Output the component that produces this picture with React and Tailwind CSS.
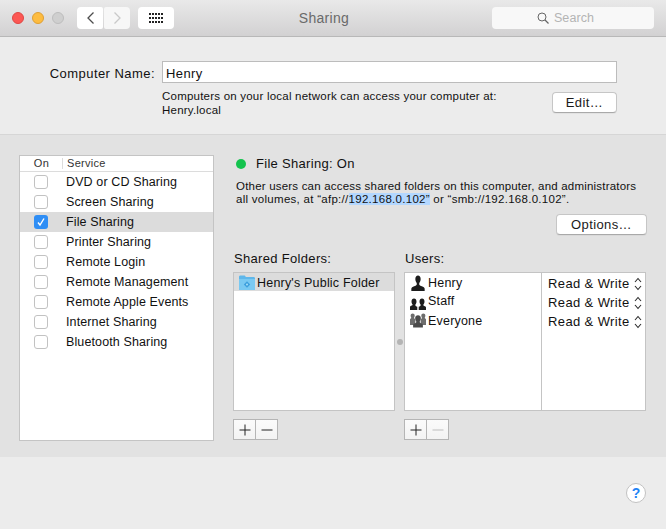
import React from 'react';

const services = [
  'DVD or CD Sharing',
  'Screen Sharing',
  'File Sharing',
  'Printer Sharing',
  'Remote Login',
  'Remote Management',
  'Remote Apple Events',
  'Internet Sharing',
  'Bluetooth Sharing',
];

const Light = ({ className }) => (
  <span className={`block w-3 h-3 rounded-full border ${className}`} />
);

const Person = ({ className }) => (
  <svg viewBox="0 0 16 18" className={className}>
    <path d="M5 4.500C5 2 6.200 0.500 8 0.500S11 2 11 4.500c0 2-.7 3.600-1.600 4.500v1.600c0 .9 1.500 1.400 3 2 1.600.6 3.100 1.300 3.100 2.900V18H.5v-2.500c0-1.600 1.500-2.300 3.100-2.900 1.500-.6 3-1.100 3-2V9C5.700 8.100 5 6.500 5 4.500z" fill="currentColor" />
  </svg>
);

const Staff = () => (
  <svg viewBox="0 0 16 12" className="w-4 h-3 text-[#1c1c1c]">
    <path d="M1.500 3.500C1.500 1.500 2.500.5 4 .5s2.500 1 2.500 3c0 1.300-.5 2.500-1.100 3.100v.9c0 .5 1 .8 1.900 1.200V12H0V8.900c0-.7.9-1 1.700-1.400.5-.2.9-.4.9-.7v-.2C2 6 1.500 4.800 1.500 3.500z" fill="currentColor" />
    <path d="M9.500 3.500c0-2 1-3 2.500-3s2.500 1 2.500 3c0 1.300-.5 2.500-1.100 3.100v.6c0 .4.500.6.900.8.800.4 1.700.7 1.700 1.400V12H8.700V8.700c.9-.4 1.900-.7 1.900-1.200v-.9C10 6 9.500 4.800 9.500 3.500z" fill="currentColor" />
  </svg>
);

const Everyone = () => (
  <svg viewBox="0 0 18 16" className="w-4 h-[15px]">
    <path d="M0 13V7c0-1 1-1.300 1.500-1.800C1 4.500.7 3.500.7 2.500.7 1 1.700 0 3 0s2.300 1 2.300 2.500c0 1-.3 2-.8 2.700L6 7v6z" fill="#6d6d6d" />
    <path d="M18 13V7c0-1-1-1.300-1.500-1.800.5-.7.8-1.700.8-2.700C17.300 1 16.300 0 15 0s-2.300 1-2.300 2.500c0 1 .3 2 .8 2.700L12 7v6z" fill="#6d6d6d" />
    <path d="M5.800 5.500C5.800 3.500 7 2.200 9 2.200s3.200 1.300 3.200 3.300c0 1.400-.5 2.600-1.200 3.400v1c0 .6 1 1 2 1.500 1 .4 1.500 1 1.500 2V16H3.500v-2.600c0-1 .5-1.600 1.500-2 1-.5 2-.9 2-1.500v-1c-.7-.8-1.200-2-1.200-3.400z" fill="#4a4a4a" />
  </svg>
);

const Folder = () => (
  <svg viewBox="0 0 16 15" className="w-4 h-[15px]">
    <path d="M0 2C0 1 .5.500 1.500.500h3.700c.8 0 1 .3 1.300 1l.3.500H14.500c1 0 1.500.5 1.500 1.500V13.500c0 1-.5 1.500-1.500 1.500h-13C.5 15 0 14.500 0 13.500z" fill="#5fb7ea" />
    <path d="M0 4h16v9.500c0 1-.5 1.500-1.500 1.500h-13C.5 15 0 14.500 0 13.500z" fill="#79c9f2" />
    <path d="M8 6.200L11.200 9.500 8 12.800 4.800 9.500z" fill="#3c9fdd" />
    <circle cx="8" cy="9.500" r="1" fill="#a9e0f8" />
  </svg>
);

const Stepper = () => (
  <svg viewBox="0 0 8 14" className="w-2 h-[14px] text-[#2a2a2a]">
    <path d="M1 5l3-3.500L7 5M1 9l3 3.500L7 9" fill="none" stroke="currentColor" strokeWidth="1.100" />
  </svg>
);

const PlusMinus = ({ minusDisabled }) => (
  <div className="flex w-[45px] h-[21px] border border-[#b5b5b5] bg-gradient-to-b from-[#fbfbfb] to-[#f3f3f3]">
    <div className="flex-1 flex items-center justify-center border-r border-[#b5b5b5]">
      <svg viewBox="0 0 12 12" className="w-3 h-3">
        <path d="M6 0.500v11M0.500 6h11" stroke="#222" strokeWidth="1" />
      </svg>
    </div>
    <div className="flex-1 flex items-center justify-center">
      <svg viewBox="0 0 12 12" className="w-3 h-3">
        <path d="M0.500 6h11" stroke={minusDisabled ? '#bdbdbd' : '#222'} strokeWidth="1" />
      </svg>
    </div>
  </div>
);

const PushButton = ({ className, children }) => (
  <button className={`block bg-white rounded-[4px] border border-[#c6c6c6] border-b-[#a9a9a9] text-[13px] tracking-[0.4px] text-[#1a1a1a] leading-none shadow-[0_1px_0_rgba(0,0,0,0.04)] ${className}`}>
    {children}
  </button>
);

export default function App() {
  return (
    <div className="w-[666px] h-[529px] flex flex-col bg-[#ececec] overflow-hidden font-['Liberation_Sans',Arial,sans-serif] text-[#111]">
      {/* title bar */}
      <div className="relative h-[37px] shrink-0 flex items-center pl-3 pr-3 border-b border-[#b8b8b8] bg-gradient-to-b from-[#e9e9e9] to-[#d2d1d2]">
        <div className="flex gap-2 mb-[1px]">
          <Light className="bg-[#fc5753] border-[#df4744]" />
          <Light className="bg-[#fdbc40] border-[#de9f34]" />
          <Light className="bg-[#cfcfcf] border-[#bdbdbd]" />
        </div>
        <div className="flex gap-px ml-[13px] mb-[1px]">
          <div className="w-[26px] h-[22px] bg-white rounded-l-[4px] rounded-r-[2px] flex items-center justify-center">
            <svg viewBox="0 0 9 14" className="w-[9px] h-[14px]">
              <path d="M7.500 1.500L2 7l5.500 5.500" fill="none" stroke="#4d4d4d" strokeWidth="1.300" />
            </svg>
          </div>
          <div className="w-[26px] h-[22px] bg-[#f7f7f7] rounded-r-[4px] rounded-l-[2px] flex items-center justify-center">
            <svg viewBox="0 0 9 14" className="w-[9px] h-[14px]">
              <path d="M1.500 1.500L7 7l-5.500 5.500" fill="none" stroke="#c9c9c9" strokeWidth="1.300" />
            </svg>
          </div>
        </div>
        <div className="w-9 h-[22px] ml-2 mb-[1px] bg-white rounded-[4px] flex items-center justify-center">
          <div className="grid grid-cols-5 gap-x-px gap-y-[2px]">
            {Array.from({ length: 15 }).map((_, i) => (
              <span key={i} className="block w-[2px] h-[2px] bg-[#222]" />
            ))}
          </div>
        </div>
        <div className="flex-1 text-center text-[14px] tracking-[0.3px] text-[#6a6a6a] pr-[18px]">Sharing</div>
        <div className="w-[162px] h-[22px] mb-[1px] bg-[#f8f8f8] rounded-[4px] flex items-center justify-center gap-[5px] pr-[15px]">
          <svg viewBox="0 0 12 12" className="w-3 h-3">
            <circle cx="5" cy="5" r="4" fill="none" stroke="#666" strokeWidth="1" />
            <path d="M8 8l3.500 3.500" stroke="#666" strokeWidth="1.200" />
          </svg>
          <span className="text-[12.500px] tracking-[0.1px] text-[#b4b4b4] mt-[2px]">Search</span>
        </div>
      </div>

      {/* computer name */}
      <div className="h-[98px] shrink-0 pt-6 border-b border-[#d6d6d6]">
        <div className="flex items-center h-[22px]">
          <div className="w-[155px] text-right text-[13px] tracking-[0.45px] pt-[4px]">Computer Name:</div>
          <div className="ml-[7px] w-[455px] h-[22px] pl-[3px] bg-white border border-[#bcbcbc] text-[13px] tracking-[0.4px] leading-[24px]">Henry</div>
        </div>
        <div className="flex mt-[6px] ml-[162px]">
          <div className="w-[390px] text-[11.500px] tracking-[0.22px] leading-[14px]">
            <div>Computers on your local network can access your computer at:</div>
            <div>Henry.local</div>
          </div>
          <PushButton className="w-[65px] h-[21px] mt-[3px]">Edit…</PushButton>
        </div>
      </div>

      {/* services */}
      <div className="h-[322px] shrink-0 flex pt-5 pl-[19px] bg-[#e2e2e2]">
        <div className="w-[195px] h-[286px] bg-white border border-[#c4c4c4]">
          <div className="flex items-center h-[16px] border-b border-[#dcdcdc] text-[11px] tracking-[0.3px] text-[#333]">
            <div className="w-[43px] text-center pl-[1px] border-r border-[#dcdcdc] leading-[11px]">On</div>
            <div className="pl-[4px]">Service</div>
          </div>
          <div>
            {services.map((name) => {
              const on = name === 'File Sharing';
              return (
                <div key={name} className={`flex items-center h-5 ${on ? 'bg-[#dcdcdc]' : ''}`}>
                  {on ? (
                    <span className="ml-[14px] w-[14px] h-[14px] rounded-[3px] bg-[#2f8ef5] flex items-center justify-center">
                      <svg viewBox="0 0 10 10" className="w-[10px] h-[10px]">
                        <path d="M2 5.500L4 8 8 1.500" fill="none" stroke="#fff" strokeWidth="1.400" />
                      </svg>
                    </span>
                  ) : (
                    <span className="ml-[14px] w-[14px] h-[14px] rounded-[3px] bg-white border border-[#c2c2c2]" />
                  )}
                  <span className="ml-[18px] text-[12.500px] tracking-[0.12px]">{name}</span>
                </div>
              );
            })}
          </div>
        </div>

        <div className="ml-[19px] w-[414px]">
          <div className="flex items-center h-[20px] mt-[-1px] pl-[3px]">
            <span className="block w-[10px] h-[10px] rounded-full bg-[#14c34e]" />
            <span className="ml-[10px] text-[13px] tracking-[0.3px]">File Sharing: On</span>
          </div>
          <div className="mt-[6px] pl-[3px] text-[11.500px] tracking-[0.2px] leading-[13px] whitespace-nowrap">
            <div>Other users can access shared folders on this computer, and administrators</div>
            <div className="tracking-[0.28px]">
              all volumes, at “afp://<span className="bg-[#b3d7ff]">192.168.0.102”</span> or “smb://192.168.0.102”.
            </div>
          </div>
          <div className="flex justify-end mt-[8px]">
            <PushButton className="w-[91px] h-[21px]">Options…</PushButton>
          </div>
          <div className="flex mt-[14px] text-[13px] tracking-[0.32px] h-[23px]">
            <div className="w-[172px] pl-[1px]">Shared Folders:</div>
            <div>Users:</div>
          </div>
          <div className="flex items-center">
            <div className="w-[162px] h-[139px] bg-white border border-[#c4c4c4]">
              <div className="flex items-center h-[18px] bg-[#dcdcdc] pl-[5px] gap-[2px] text-[12.500px] tracking-[0.2px]">
                <Folder />
                <span className="mt-[2px]">Henry's Public Folder</span>
              </div>
            </div>
            <div className="w-[9px] flex justify-center">
              <span className="block w-[6px] h-[6px] rounded-full bg-[#b4b4b4]" />
            </div>
            <div className="w-[242px] h-[139px] flex bg-white border border-[#c4c4c4]">
              <div className="w-[137px] border-r border-[#c4c4c4] pl-[5px] pt-px text-[12.500px] tracking-[0.2px]">
                <div className="flex items-center h-[18px]">
                  <Person className="w-4 h-[16px] text-[#1c1c1c]" />
                  <span className="ml-[2px]">Henry</span>
                </div>
                <div className="flex items-center h-[19px]">
                  <span className="mt-[4px]"><Staff /></span>
                  <span className="ml-[2px] -mt-px">Staff</span>
                </div>
                <div className="flex items-center h-[19px]">
                  <Everyone />
                  <span className="ml-[2px] mt-[2px]">Everyone</span>
                </div>
              </div>
              <div className="flex-1 pl-[6px] pt-px text-[13px] tracking-[0.38px]">
                {[0, 1, 2].map((i) => (
                  <div key={i} className="flex items-center justify-between pr-[3px] h-[19px]">
                    <span>Read &amp; Write</span>
                    <Stepper />
                  </div>
                ))}
              </div>
            </div>
          </div>
          <div className="flex gap-[126px] mt-2">
            <PlusMinus />
            <PlusMinus minusDisabled />
          </div>
        </div>
      </div>

      {/* help */}
      <div className="flex-1 flex justify-end pt-[26px] pr-5">
        <div className="w-5 h-5 rounded-full bg-white border border-[#c2c2c2] flex items-center justify-center text-[14px] font-bold text-[#1f84f5]">?</div>
      </div>
    </div>
  );
}
